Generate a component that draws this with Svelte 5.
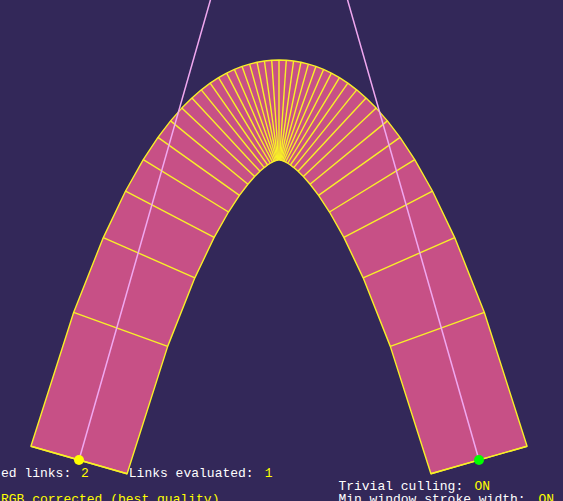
<script>
  const start = { x: 79, y: 460 };
  const end = { x: 479, y: 460 };
  const apex = 110;
  const halfWidth = 50;
  const steps = 19;

  // Symmetric curve: both control points share the height `controlY`.
  const span = end.x - start.x;
  const controlY = start.y - ((start.y - apex) * 4) / 3;
  const controlA = { x: start.x + span / 3, y: controlY };
  const controlB = { x: end.x - span / 3, y: controlY };

  // Ribs are placed at equal turns of the tangent.
  const rise = 4 * (start.y - apex);
  const maxSlope = rise / span;
  const maxAngle = Math.atan(maxSlope);

  const ribs = Array.from({ length: steps * 2 + 1 }, (_, i) => {
    const angle = maxAngle * (1 - i / steps);
    const t = (1 - Math.tan(angle) / maxSlope) / 2;
    const x = start.x + span * t;
    const y = start.y - rise * t * (1 - t);
    const nx = halfWidth * Math.sin(angle);
    const ny = halfWidth * Math.cos(angle);
    return { x1: x - nx, y1: y - ny, x2: x + nx, y2: y + ny };
  });

  const outline = [
    ...ribs.map((r) => `${r.x1},${r.y1}`),
    ...ribs.map((r) => `${r.x2},${r.y2}`).reverse()
  ].join(' ');

  const linkStats = [
    { label: 'ed links: ', value: '2' },
    { label: 'Links evaluated: ', value: '1' }
  ];
  const options = [
    { label: 'Trivial culling: ', value: 'ON' },
    { label: 'Min window stroke width: ', value: 'ON' }
  ];
  const cell = 8;
</script>

{#snippet stat(item)}
  <span class="stat">
    <span class="label" style="width: {item.label.length * cell}px">{item.label}</span><span class="value">{item.value}</span>
  </span>
{/snippet}

<main>
  <svg viewBox="0 0 563 501" preserveAspectRatio="xMidYMid slice" role="img" aria-label="Stroked curve">
    <polygon class="fill" points={outline} />
    <g class="mesh">
      {#each ribs as r}
        <line x1={r.x1} y1={r.y1} x2={r.x2} y2={r.y2} />
      {/each}
      <polygon points={outline} />
    </g>
    <g class="handle">
      <line x1={start.x} y1={start.y} x2={controlA.x} y2={controlA.y} />
      <line x1={end.x} y1={end.y} x2={controlB.x} y2={controlB.y} />
    </g>
    <circle class="start" cx={start.x} cy={start.y} r="5" />
    <circle class="end" cx={end.x} cy={end.y} r="5" />
  </svg>

  <div class="hud">
    <div class="left">
      <div class="links">
        {#each linkStats as item}
          {@render stat(item)}
        {/each}
      </div>
      <div class="value">RGB corrected (best quality)</div>
    </div>
    <div class="right">
      {#each options as item}
        {@render stat(item)}
      {/each}
    </div>
  </div>
</main>

<style>
  :global(body) {
    margin: 0;
    background: #332859;
  }
  main {
    position: relative;
    height: 100vh;
    overflow: hidden;
    background: #332859;
  }
  svg {
    display: block;
    width: 100%;
    height: 100%;
  }
  .fill {
    fill: #c75086;
  }
  .mesh {
    fill: none;
    stroke: #f8f028;
    stroke-width: 1.4;
    stroke-linejoin: round;
  }
  .handle {
    stroke: #f0a8f0;
    stroke-width: 1.5;
  }
  .start {
    fill: #ffff00;
  }
  .end {
    fill: #00ff00;
  }
  .hud {
    position: absolute;
    left: 0;
    right: 0;
    bottom: -5px;
    display: flex;
    justify-content: space-between;
    align-items: flex-end;
    padding: 0 9px 0 1px;
    font: 13px/13px "Liberation Mono", monospace;
    color: #fff;
    white-space: pre;
  }
  .left {
    display: flex;
    flex-direction: column;
    gap: 13px;
  }
  .links {
    display: flex;
    gap: 40px;
  }
  .right {
    display: flex;
    flex-direction: column;
  }
  .stat {
    display: flex;
  }
  .label {
    flex: none;
  }
  .value {
    color: #ffff00;
  }
</style>
